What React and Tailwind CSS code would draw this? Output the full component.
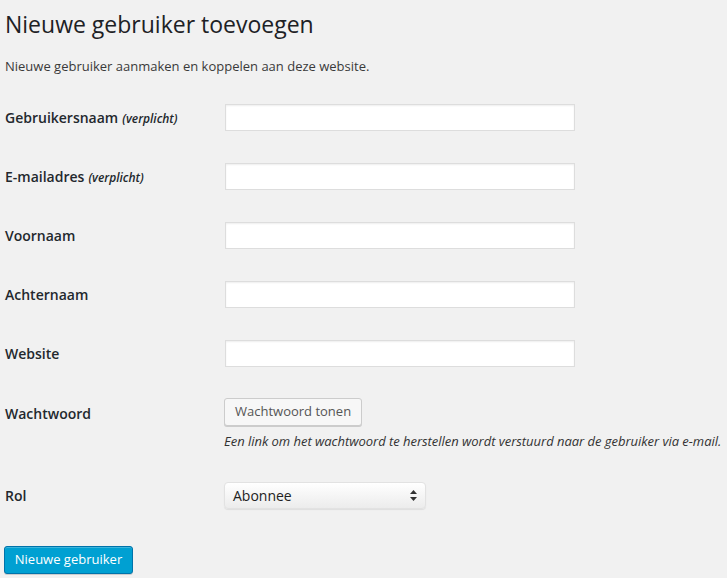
import React from "react";

const font = { fontFamily: '"Open Sans", "Noto Sans", sans-serif' };

const fields = [
  { label: "Gebruikersnaam", required: true },
  { label: "E-mailadres", required: true },
  { label: "Voornaam" },
  { label: "Achternaam" },
  { label: "Website" },
];

const Row = ({ label, required, children }) => (
  <div className="flex items-center">
    <div className="w-[220px] shrink-0 pl-[0px] text-[14px] font-semibold text-[#23282d]">
      {label}
      {required && (
        <span className="ml-[4px] text-[12px] italic font-semibold">(verplicht)</span>
      )}
    </div>
    {children}
  </div>
);

export default function App() {
  return (
    <div className="min-h-screen bg-[#f1f1f1] pl-[5px] pt-[9px] text-[#444]" style={font}>
      {/* title */}
      <h1 className="text-[23px] leading-[30px] text-[#1d2125] font-normal">
        Nieuwe gebruiker toevoegen
      </h1>
      <p className="mt-[17px] text-[13px] leading-[20px] text-[#3a3a3a]">
        Nieuwe gebruiker aanmaken en koppelen aan deze website.
      </p>

      {/* form */}
      <div className="mt-[28px] flex flex-col gap-[32px]">
        {fields.map((f) => (
          <Row key={f.label} label={f.label} required={f.required}>
            <input
              type="text"
              className="h-[27px] w-[350px] border border-[#ddd] bg-white shadow-[inset_0_1px_2px_rgba(0,0,0,0.07)] outline-none"
            />
          </Row>
        ))}
      </div>

      <div className="mt-[31px] flex">
        <div className="w-[219px] shrink-0 pt-[5px] text-[14px] font-semibold text-[#23282d]">
          Wachtwoord
        </div>
        <div>
          <button className="h-[28px] rounded-[3px] border border-[#ccc] bg-[#f7f7f7] px-[10px] text-[13px] text-[#555] shadow-[0_1px_0_#ccc]">
            Wachtwoord tonen
          </button>
          <p className="mt-[5px] text-[13px] leading-[20px] italic tracking-[-0.03px] text-[#333]">
            Een link om het wachtwoord te herstellen wordt verstuurd naar de gebruiker via e-mail.
          </p>
        </div>
      </div>

      <div className="mt-[31px] flex items-center">
        <div className="w-[219px] shrink-0 text-[14px] font-semibold text-[#23282d]">Rol</div>
        <div className="relative h-[27px] w-[202px] rounded-[4px] border border-[#e2e2e2] bg-gradient-to-b from-white to-[#ececec] shadow-[0_1px_1px_rgba(0,0,0,0.08)]">
          <span className="absolute left-[8px] top-[2px] text-[14px] text-[#222]">Abonnee</span>
          <svg
            className="absolute right-[8px] top-[7px]"
            width="7"
            height="11"
            viewBox="0 0 7 11"
          >
            <path d="M3.5 0 L7 4 L0 4 Z" fill="#333" />
            <path d="M3.5 11 L7 7 L0 7 Z" fill="#333" />
          </svg>
        </div>
      </div>

      <button className="mt-[37px] h-[28px] w-[129px] -ml-[1px] rounded-[3px] border border-[#0073aa] bg-[#00a0d2] text-[13px] text-white shadow-[inset_0_1px_0_rgba(120,200,230,0.5),0_1px_0_rgba(0,0,0,0.15)]">
        Nieuwe gebruiker
      </button>
    </div>
  );
}
